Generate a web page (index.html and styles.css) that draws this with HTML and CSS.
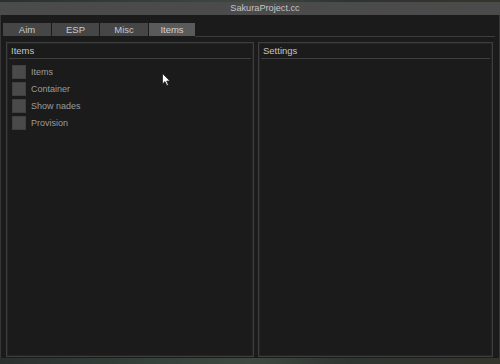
FILE: index.html
```html
<!DOCTYPE html>
<html>
<head>
<meta charset="utf-8">
<link rel="stylesheet" href="styles.css">
</head>
<body>
<div class="window">
  <div class="titlebar">SakuraProject.cc</div>
  <div class="tabs">
    <div class="tab tab-aim">Aim</div>
    <div class="tab tab-esp">ESP</div>
    <div class="tab tab-misc">Misc</div>
    <div class="tab tab-items active">Items</div>
    <div class="tab-line"></div>
  </div>
  <div class="panels">
    <div class="panel panel-left">
      <div class="panel-title">Items</div>
      <div class="list">
        <div class="row"><span class="box"></span><span class="label">Items</span></div>
        <div class="row"><span class="box"></span><span class="label">Container</span></div>
        <div class="row"><span class="box"></span><span class="label">Show nades</span></div>
        <div class="row"><span class="box"></span><span class="label">Provision</span></div>
      </div>
    </div>
    <div class="panel panel-right">
      <div class="panel-title">Settings</div>
    </div>
  </div>
</div>
<svg class="cursor" width="10" height="14" viewBox="0 0 10 14">
  <path d="M0.5 0.5 L0.5 11 L3 8.6 L4.8 12.6 L6.4 11.9 L4.7 8.1 L8 8.1 Z" fill="#fff" stroke="#222" stroke-width="0.8"/>
</svg>
</body>
</html>
```

FILE: styles.css
```css
html, body {
  margin: 0;
  padding: 0;
}
body {
  width: 500px;
  height: 364px;
  overflow: hidden;
  position: relative;
  padding-top: 2px;
  box-sizing: border-box;
  background: linear-gradient(90deg, #2a302e 0%, #34403a 30%, #3e4840 50%, #2e3430 70%, #34342c 100%);
  font-family: "Liberation Sans", Arial, sans-serif;
  font-size: 9px;
}
.window {
  width: 500px;
  height: 356px;
  background: #1b1b1b;
  box-sizing: border-box;
  border-left: 1px solid #363636;
  border-right: 1px solid #363636;
  display: flex;
  flex-direction: column;
}
.titlebar {
  height: 13px;
  line-height: 13px;
  background: #4b4b4b;
  color: #c4c4c4;
  text-align: center;
  font-size: 9.2px;
  margin: 0 -1px;
  padding-left: 30px;
}
.tabs {
  display: flex;
  margin-top: 8px;
  padding-left: 2px;
  padding-right: 4px;
  height: 14px;
}
.tab {
  height: 13px;
  line-height: 13px;
  background: #464646;
  color: #c8c8c8;
  text-align: center;
  margin-right: 1px;
  font-size: 9.5px;
}
.tab-aim { width: 48px; }
.tab-esp { width: 47px; }
.tab-misc { width: 48px; }
.tab-items { width: 46px; margin-right: 0; }
.tab.active {
  background: #5a5a5a;
  color: #d0d0d0;
}
.tab-line {
  flex: 1;
  height: 13px;
  border-bottom: 1px solid #3c3c3c;
}
.panels {
  display: flex;
  gap: 4px;
  margin-top: 5px;
  padding-left: 5px;
  padding-right: 6px;
  height: 315px;
}
.panel {
  box-sizing: border-box;
  height: 315px;
  border: 1px solid #3e3e3e;
  box-shadow: inset 0 0 0 1px #242424;
  padding: 0 2px;
}
.panel-left { width: 248px; }
.panel-right { width: 235px; }
.panel-title {
  height: 15px;
  line-height: 16px;
  padding-left: 2px;
  color: #c4c4c4;
  font-size: 9.5px;
  border-bottom: 1px solid #404040;
}
.list {
  padding-top: 6px;
  padding-left: 3px;
  display: flex;
  flex-direction: column;
}
.row {
  display: flex;
  align-items: center;
  height: 17px;
}
.box {
  width: 14px;
  height: 14px;
  box-sizing: border-box;
  background: #4a4a4a;
  border: 1px solid #404040;
  margin-right: 5px;
  margin-bottom: 3px;
}
.label {
  color: #9c9c9c;
  margin-bottom: 3px;
}
.cursor {
  position: absolute;
  left: 162px;
  top: 73px;
}
```
